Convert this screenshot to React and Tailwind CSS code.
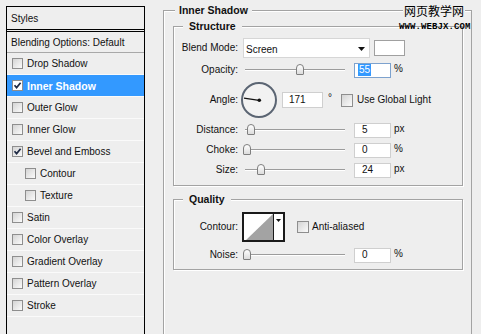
import React from 'react';

const styleItems = [
  { label: 'Drop Shadow' },
  { label: 'Inner Shadow', checked: true, selected: true },
  { label: 'Outer Glow' },
  { label: 'Inner Glow' },
  { label: 'Bevel and Emboss', checked: true },
  { label: 'Contour', indent: true },
  { label: 'Texture', indent: true },
  { label: 'Satin' },
  { label: 'Color Overlay' },
  { label: 'Gradient Overlay' },
  { label: 'Pattern Overlay' },
  { label: 'Stroke' },
];

function Check({ checked, white, size = 'w-[11px] h-[11px]' }) {
  return (
    <span
      className={`flex shrink-0 items-center justify-center border border-[#8e8e8e] ${size} ${
        white ? 'bg-white' : 'bg-linear-to-br from-[#d4d4d4] to-[#fbfbfb]'
      }`}
    >
      {checked && (
        <svg viewBox="0 0 9 9" className="w-[9px] h-[9px]">
          <path d="M1.5 4.2 L3.6 6.6 L7.6 1.8" stroke="#1e2a44" strokeWidth="1.7" fill="none" />
        </svg>
      )}
    </span>
  );
}

function StylesList() {
  return (
    <div className="ml-[6px] mt-[6px] w-[139px] h-[340px] shrink-0 border border-black flex flex-col">
      <div className="h-[25px] flex items-center pl-[4px] pt-[1px] border-b-[3px] border-double border-black">Styles</div>
      <div className="h-[21px] flex items-center pl-[4px] pt-[1px] border-b border-[#a8a8a8]">Blending Options: Default</div>
      {styleItems.map(item => (
        <div
          key={item.label}
          className={`h-[22px] flex items-center border-b border-[#fafafa] ${item.indent ? 'pl-[18px]' : 'pl-[5px]'} ${
            item.selected ? 'bg-[#3399ff] text-white font-bold text-[10.5px]' : ''
          }`}
        >
          <Check checked={item.checked} white={item.selected} />
          <span className="ml-[4px]">{item.label}</span>
        </div>
      ))}
    </div>
  );
}

function Group({ title, className, children }) {
  return (
    <div className={`relative ml-[9px] w-[290px] border border-[#a3a3a3] shadow-[inset_1px_1px_0_#fff,1px_1px_0_#fff] ${className}`}>
      <span className="absolute left-[9px] top-[-7px] px-[6px] bg-[#eeeeee] font-bold text-[10.5px] leading-[13px]">{title}</span>
      {children}
    </div>
  );
}

function Row({ label, className = 'h-[20px]', children }) {
  return (
    <div className={`flex items-center ${className}`}>
      <span className="w-[64px] text-right">{label}</span>
      {children}
    </div>
  );
}

function Slider({ thumb }) {
  return (
    <div className="relative ml-[5px] w-[102px] h-[20px]">
      <div className="absolute left-[2px] right-0 top-[9px] h-[2px] border-t border-[#9c9c9c] border-b border-b-white" />
      <div
        style={{ left: thumb }}
        className="absolute top-[4px] w-[8px] h-[11px] rounded-t-[4px] rounded-b-[1px] border border-[#7f7f7f] bg-linear-to-b from-white to-[#dcdcdc]"
      />
    </div>
  );
}

function NumInput({ children, focused, className = 'w-[37px] h-[15px] pl-[7px]' }) {
  return (
    <div
      className={`flex items-center bg-white border ${focused ? 'border-[#7da2ce]' : 'border-[#cfcfcf]'} ${className}`}
    >
      {children}
    </div>
  );
}

function SliderRow({ label, thumb, value, unit, focused }) {
  return (
    <Row label={label}>
      <Slider thumb={thumb} />
      <div className="ml-[9px]">
        <NumInput focused={focused} className={`w-[37px] h-[15px] ${focused ? 'pl-[3px]' : 'pl-[7px]'}`}>
          {focused ? <span className="bg-[#3399ff] text-white px-[1px]">{value}</span> : value}
        </NumInput>
      </div>
      <span className="ml-[3px] -mt-[3px]">{unit}</span>
    </Row>
  );
}

export default function App() {
  return (
    <div className="relative w-[481px] h-[334px] overflow-hidden bg-[#eeeeee] text-[10px] leading-[12px] text-[#111] font-['Liberation_Sans',Arial,sans-serif] flex items-start">
      <StylesList />

      <div className="relative ml-[18px] mt-[10px] w-[309px] h-[340px] shrink-0 border border-[#a3a3a3] shadow-[inset_1px_1px_0_#fff]">
        <span className="absolute left-[11px] top-[-7px] px-[4px] bg-[#eeeeee] font-bold text-[10.5px] leading-[13px]">Inner Shadow</span>

        <Group title="Structure" className="mt-[15px]">
          <div className="pt-[11px] pb-[5px] flex flex-col">
            <Row label="Blend Mode:">
              <div className="ml-[5px] w-[127px] h-[20px] flex items-center justify-between bg-white border border-[#d6d6d6] pl-[2px] pr-[4px]">
                <span className="mt-[3px]">Screen</span>
                <svg viewBox="0 0 7 4" className="w-[7px] h-[4px] mt-[2px]">
                  <path d="M0 0 H7 L3.5 4 Z" fill="#111" />
                </svg>
              </div>
              <div className="ml-[4px] w-[31px] h-[16px] bg-white border border-[#a0a0a0]" />
            </Row>
            <div className="mt-[2px] flex flex-col">
              <SliderRow label="Opacity:" thumb={53} value="55" unit="%" focused />
            </div>
            <Row label="Angle:" className="h-[40px]">
              <div className="ml-[3px] w-[36px] h-[36px] rounded-full border-[2px] border-[#5b6573] bg-[#f2f2f2]">
                <svg viewBox="0 0 32 32" className="w-[32px] h-[32px]">
                  <path d="M1 14.2 L16 16.3" stroke="#111" strokeWidth="1.2" />
                  <circle cx="16.3" cy="16.3" r="1.8" fill="#111" />
                </svg>
              </div>
              <div className="ml-[5px]">
                <NumInput className="w-[41px] h-[16px] pl-[6px]">171</NumInput>
              </div>
              <span className="ml-[5px] -mt-[4px]">°</span>
              <span className="ml-[9px]">
                <Check size="w-[12px] h-[13px]" />
              </span>
              <span className="ml-[4px]">Use Global Light</span>
            </Row>
            <SliderRow label="Distance:" thumb={4} value="5" unit="px" />
            <SliderRow label="Choke:" thumb={0} value="0" unit="%" />
            <SliderRow label="Size:" thumb={14} value="24" unit="px" />
          </div>
        </Group>

        <Group title="Quality" className="mt-[13px]">
          <div className="pt-[11px] pb-[4px] flex flex-col">
            <Row label="Contour:" className="h-[31px]">
              <div className="ml-[4px] w-[43px] h-[30px] flex border-[2px] border-[#1a1a1a] bg-white">
                <svg viewBox="0 0 29 26" preserveAspectRatio="none" className="w-[29px] h-full">
                  <path d="M2 26 L29 0 L29 26 Z" fill="#a3a3a3" />
                </svg>
                <div className="flex-1 border-l border-[#1a1a1a] flex justify-center">
                  <svg viewBox="0 0 5 3" className="w-[5px] h-[3px] mt-[5px]">
                    <path d="M0 0 H5 L2.5 3 Z" fill="#111" />
                  </svg>
                </div>
              </div>
              <span className="ml-[12px]">
                <Check size="w-[12px] h-[12px]" />
              </span>
              <span className="ml-[3px]">Anti-aliased</span>
            </Row>
            <div className="mt-[3px] flex flex-col">
              <SliderRow label="Noise:" thumb={0} value="0" unit="%" />
            </div>
          </div>
        </Group>
      </div>

      <span className="absolute left-[403px] top-[3px] px-[1px] bg-[#eeeeee] text-[12px] leading-[15px] text-black font-['Noto_Sans_CJK_SC',sans-serif]">
        网页教学网
      </span>
      <span className="absolute left-[399px] top-[23px] text-[9px] leading-[9px] font-bold tracking-[0.1px] text-black font-['Liberation_Mono',monospace]">
        WWW.WEBJX.COM
      </span>
    </div>
  );
}
